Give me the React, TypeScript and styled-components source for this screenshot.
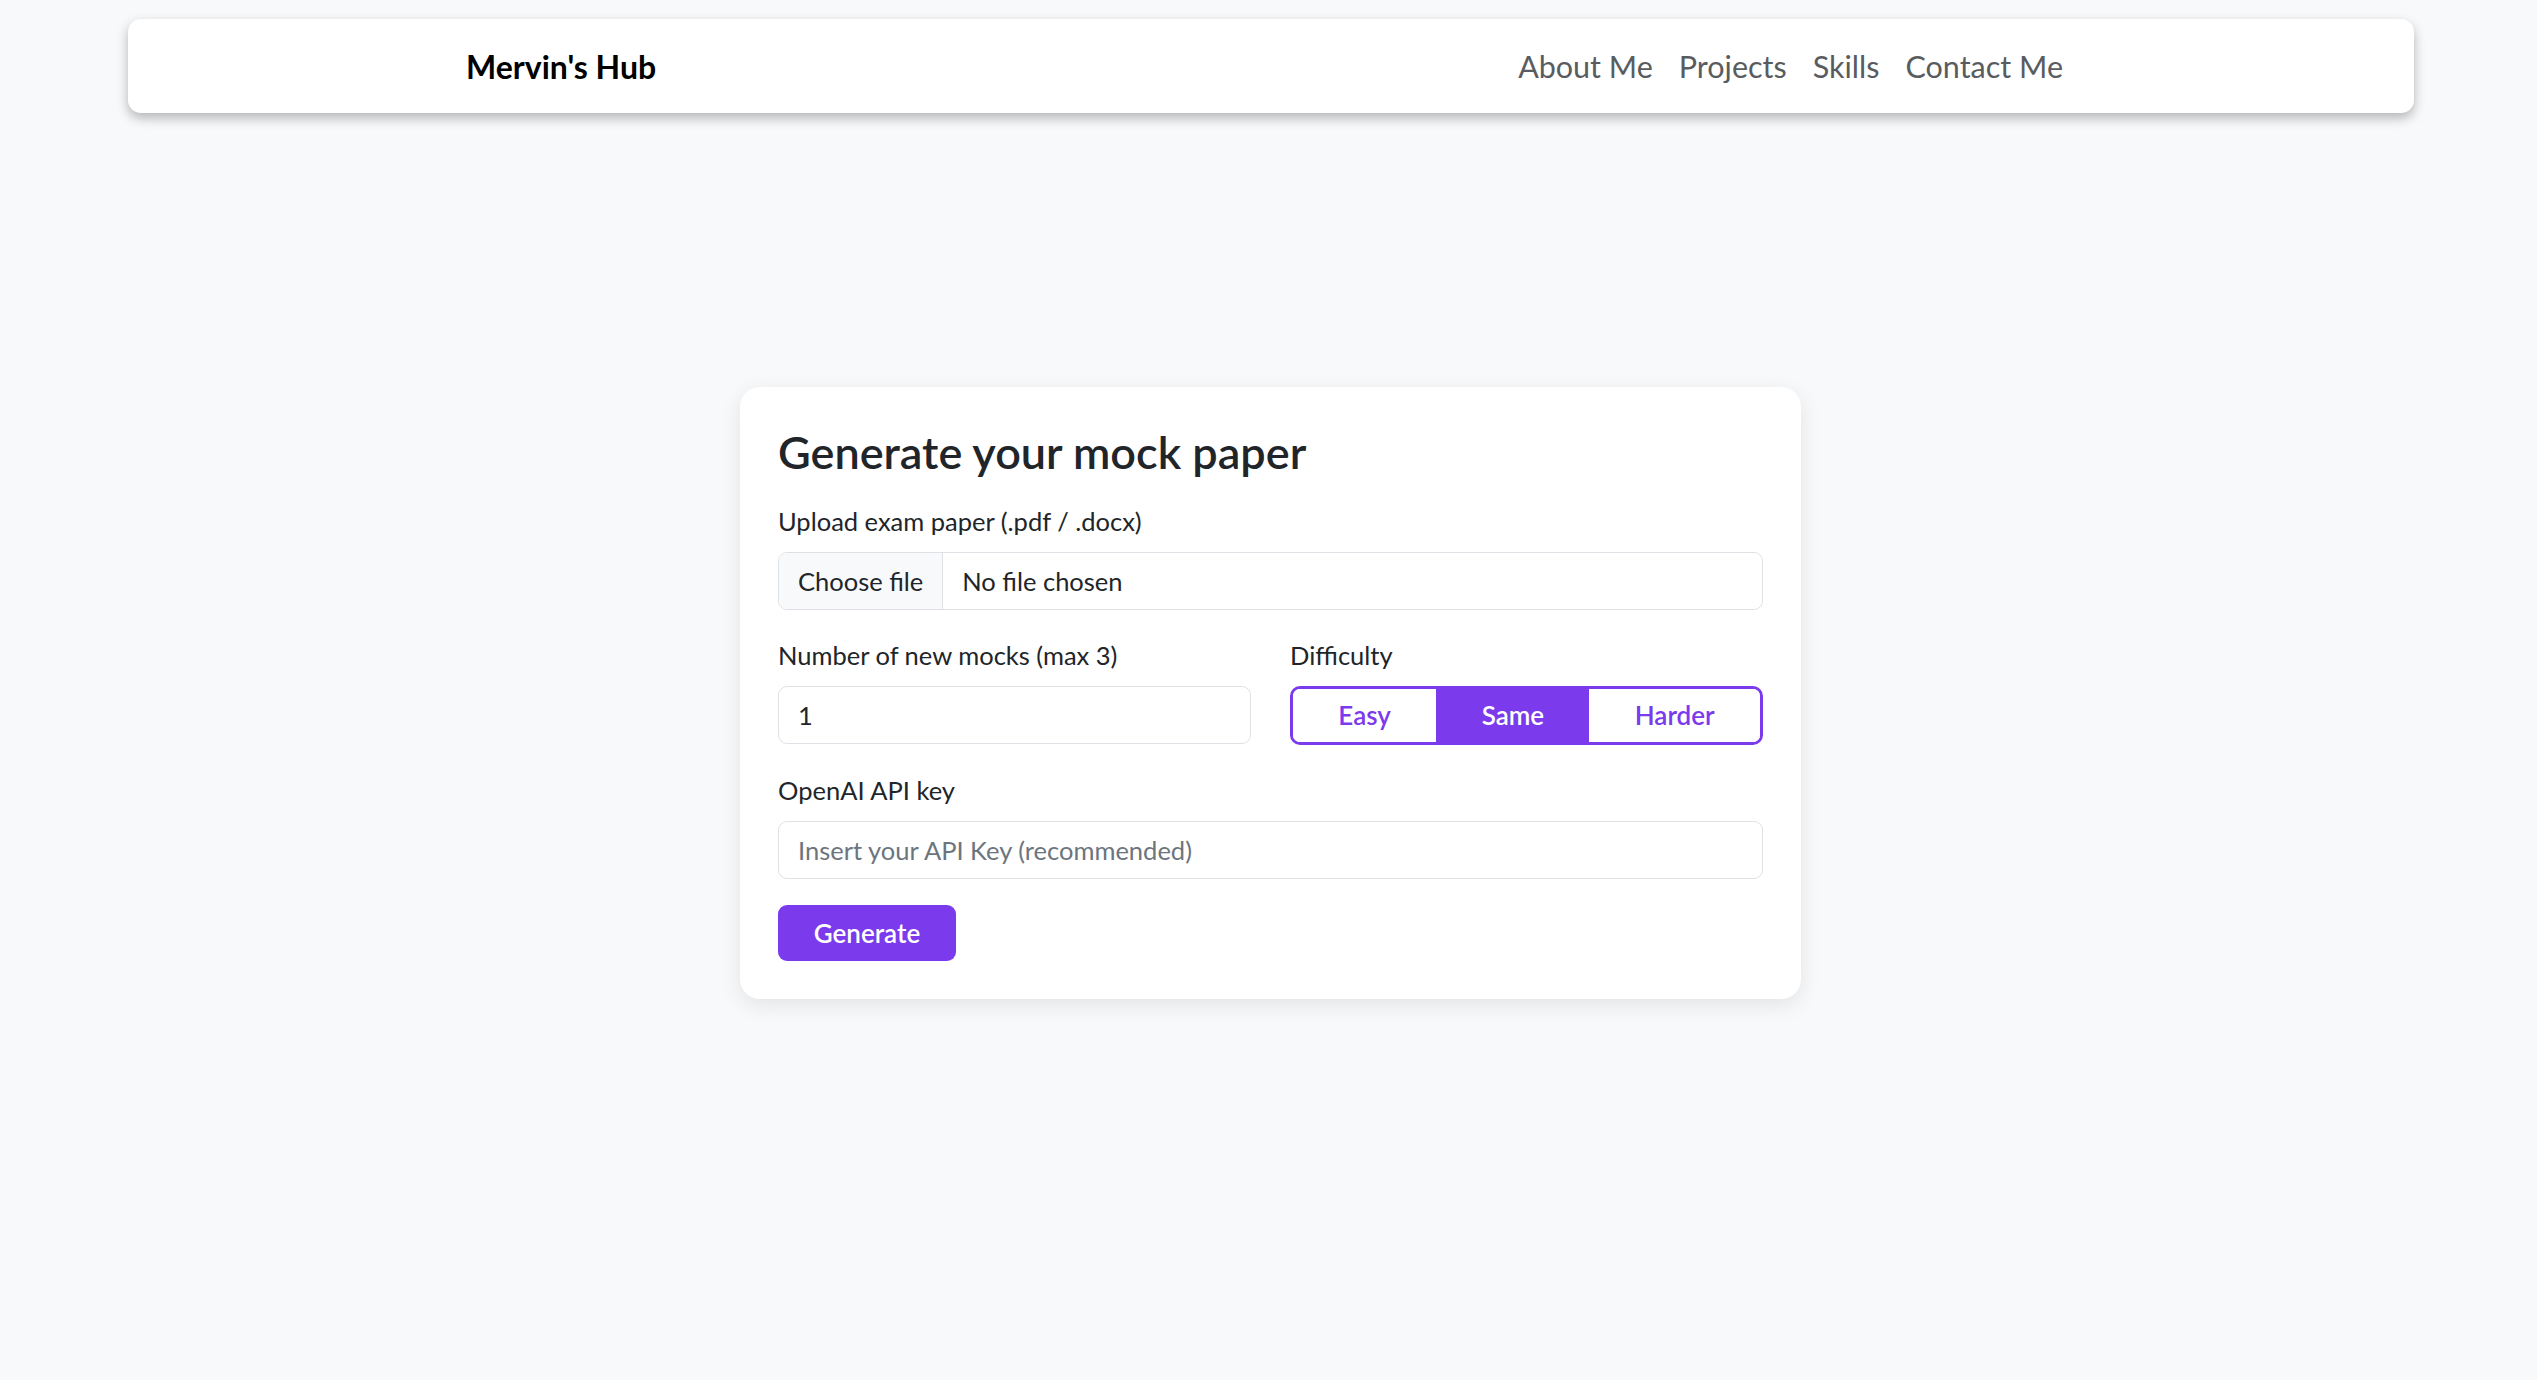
import React from "react";
import styled, { createGlobalStyle } from "styled-components";

const GlobalStyle = createGlobalStyle`
  html, body {
    margin: 0;
    padding: 0;
    background: #f8f9fa;
  }
  body {
    font-family: Lato, "Noto Sans", "Liberation Sans", sans-serif;
    color: #212529;
    font-size: 26px;
    line-height: 1.5;
  }
  * { box-sizing: border-box; }
`;

const Page = styled.div`
  min-height: 1380px;
  display: flex;
  flex-direction: column;
`;

const NavBar = styled.nav`
  margin: 19px 123px 0 128px;
  height: 94px;
  background: #fff;
  border-radius: 13px;
  box-shadow: 0 5px 12px rgba(0, 0, 0, 0.28);
  display: flex;
  align-items: center;
  justify-content: space-between;
  padding: 2px 351px 0 338px;
`;

const Brand = styled.a`
  font-size: 32px;
  font-weight: 700;
  color: #000;
  text-decoration: none;
`;

const NavLinks = styled.div`
  display: flex;
  align-items: center;
  gap: 26px;
`;

const NavLink = styled.a`
  font-size: 30.5px;
  color: #595c5f;
  text-decoration: none;
`;

const Main = styled.main`
  display: flex;
  justify-content: center;
  padding: 274px 0 0 4px;
`;

const Card = styled.section`
  width: 1061px;
  background: #fff;
  border-radius: 20px;
  padding: 38px;
  box-shadow: 0 6px 22px rgba(0, 0, 0, 0.09);
`;

const Title = styled.h3`
  margin: 0 0 23px;
  font-size: 45px;
  font-weight: 600;
  line-height: 1.2;
  color: #212529;
`;

const Field = styled.div`
  margin-bottom: 26px;
  display: flex;
  flex-direction: column;
`;

const Label = styled.label`
  font-size: 25.5px;
  line-height: 39px;
  margin-bottom: 11px;
  color: #212529;
`;

const FileBox = styled.div`
  height: 58px;
  border: 1.6px solid #dee2e6;
  border-radius: 9px;
  display: flex;
  align-items: stretch;
  overflow: hidden;
  background: #fff;
  font-size: 25.5px;
`;

const FileButton = styled.span`
  display: flex;
  align-items: center;
  padding: 0 19px;
  background: #f8f9fa;
  border-right: 1.6px solid #dee2e6;
  color: #212529;
`;

const FileName = styled.span`
  display: flex;
  align-items: center;
  padding: 0 19px;
  color: #212529;
`;

const TextInput = styled.input`
  height: 58px;
  width: 100%;
  border: 1.6px solid #dee2e6;
  border-radius: 9px;
  padding: 0 19px;
  font: inherit;
  font-size: 25.5px;
  color: #212529;
  background: #fff;
  outline: none;
  &::placeholder {
    color: #6c757d;
  }
`;

const Row = styled.div`
  display: grid;
  grid-template-columns: 1fr 1fr;
  column-gap: 39px;
  margin-bottom: 26px;
`;

const Col = styled.div`
  display: flex;
  flex-direction: column;
`;

const ButtonGroup = styled.div`
  display: flex;
  height: 59px;
  border: 3px solid #7c3aed;
  border-radius: 10px;
  overflow: hidden;
`;

const SegButton = styled.button<{ $active?: boolean }>`
  flex: 1 1 auto;
  border: none;
  margin: 0;
  padding: 0 19px;
  font: inherit;
  font-size: 26px;
  font-weight: 600;
  background: ${(p) => (p.$active ? "#7c3aed" : "#fff")};
  color: ${(p) => (p.$active ? "#fff" : "#7c3aed")};
  cursor: pointer;
`;

const PrimaryButton = styled.button`
  display: block;
  height: 56px;
  width: 178px;
  border: none;
  border-radius: 9px;
  background: #7c3aed;
  color: #fff;
  font: inherit;
  font-size: 26px;
  font-weight: 600;
  cursor: pointer;
`;

export default function App() {
  return (
    <Page>
      <GlobalStyle />
      <NavBar>
        <Brand href="#">Mervin's Hub</Brand>
        <NavLinks>
          <NavLink href="#">About Me</NavLink>
          <NavLink href="#">Projects</NavLink>
          <NavLink href="#">Skills</NavLink>
          <NavLink href="#">Contact Me</NavLink>
        </NavLinks>
      </NavBar>
      <Main>
        <Card>
          <Title>Generate your mock paper</Title>
          <Field>
            <Label>Upload exam paper (.pdf / .docx)</Label>
            <FileBox>
              <FileButton>Choose file</FileButton>
              <FileName>No file chosen</FileName>
            </FileBox>
          </Field>
          <Row>
            <Col>
              <Label>Number of new mocks (max 3)</Label>
              <TextInput type="number" defaultValue={1} />
            </Col>
            <Col>
              <Label>Difficulty</Label>
              <ButtonGroup>
                <SegButton>Easy</SegButton>
                <SegButton $active>Same</SegButton>
                <SegButton>Harder</SegButton>
              </ButtonGroup>
            </Col>
          </Row>
          <Field>
            <Label>OpenAI API key</Label>
            <TextInput type="text" placeholder="Insert your API Key (recommended)" />
          </Field>
          <PrimaryButton>Generate</PrimaryButton>
        </Card>
      </Main>
    </Page>
  );
}
